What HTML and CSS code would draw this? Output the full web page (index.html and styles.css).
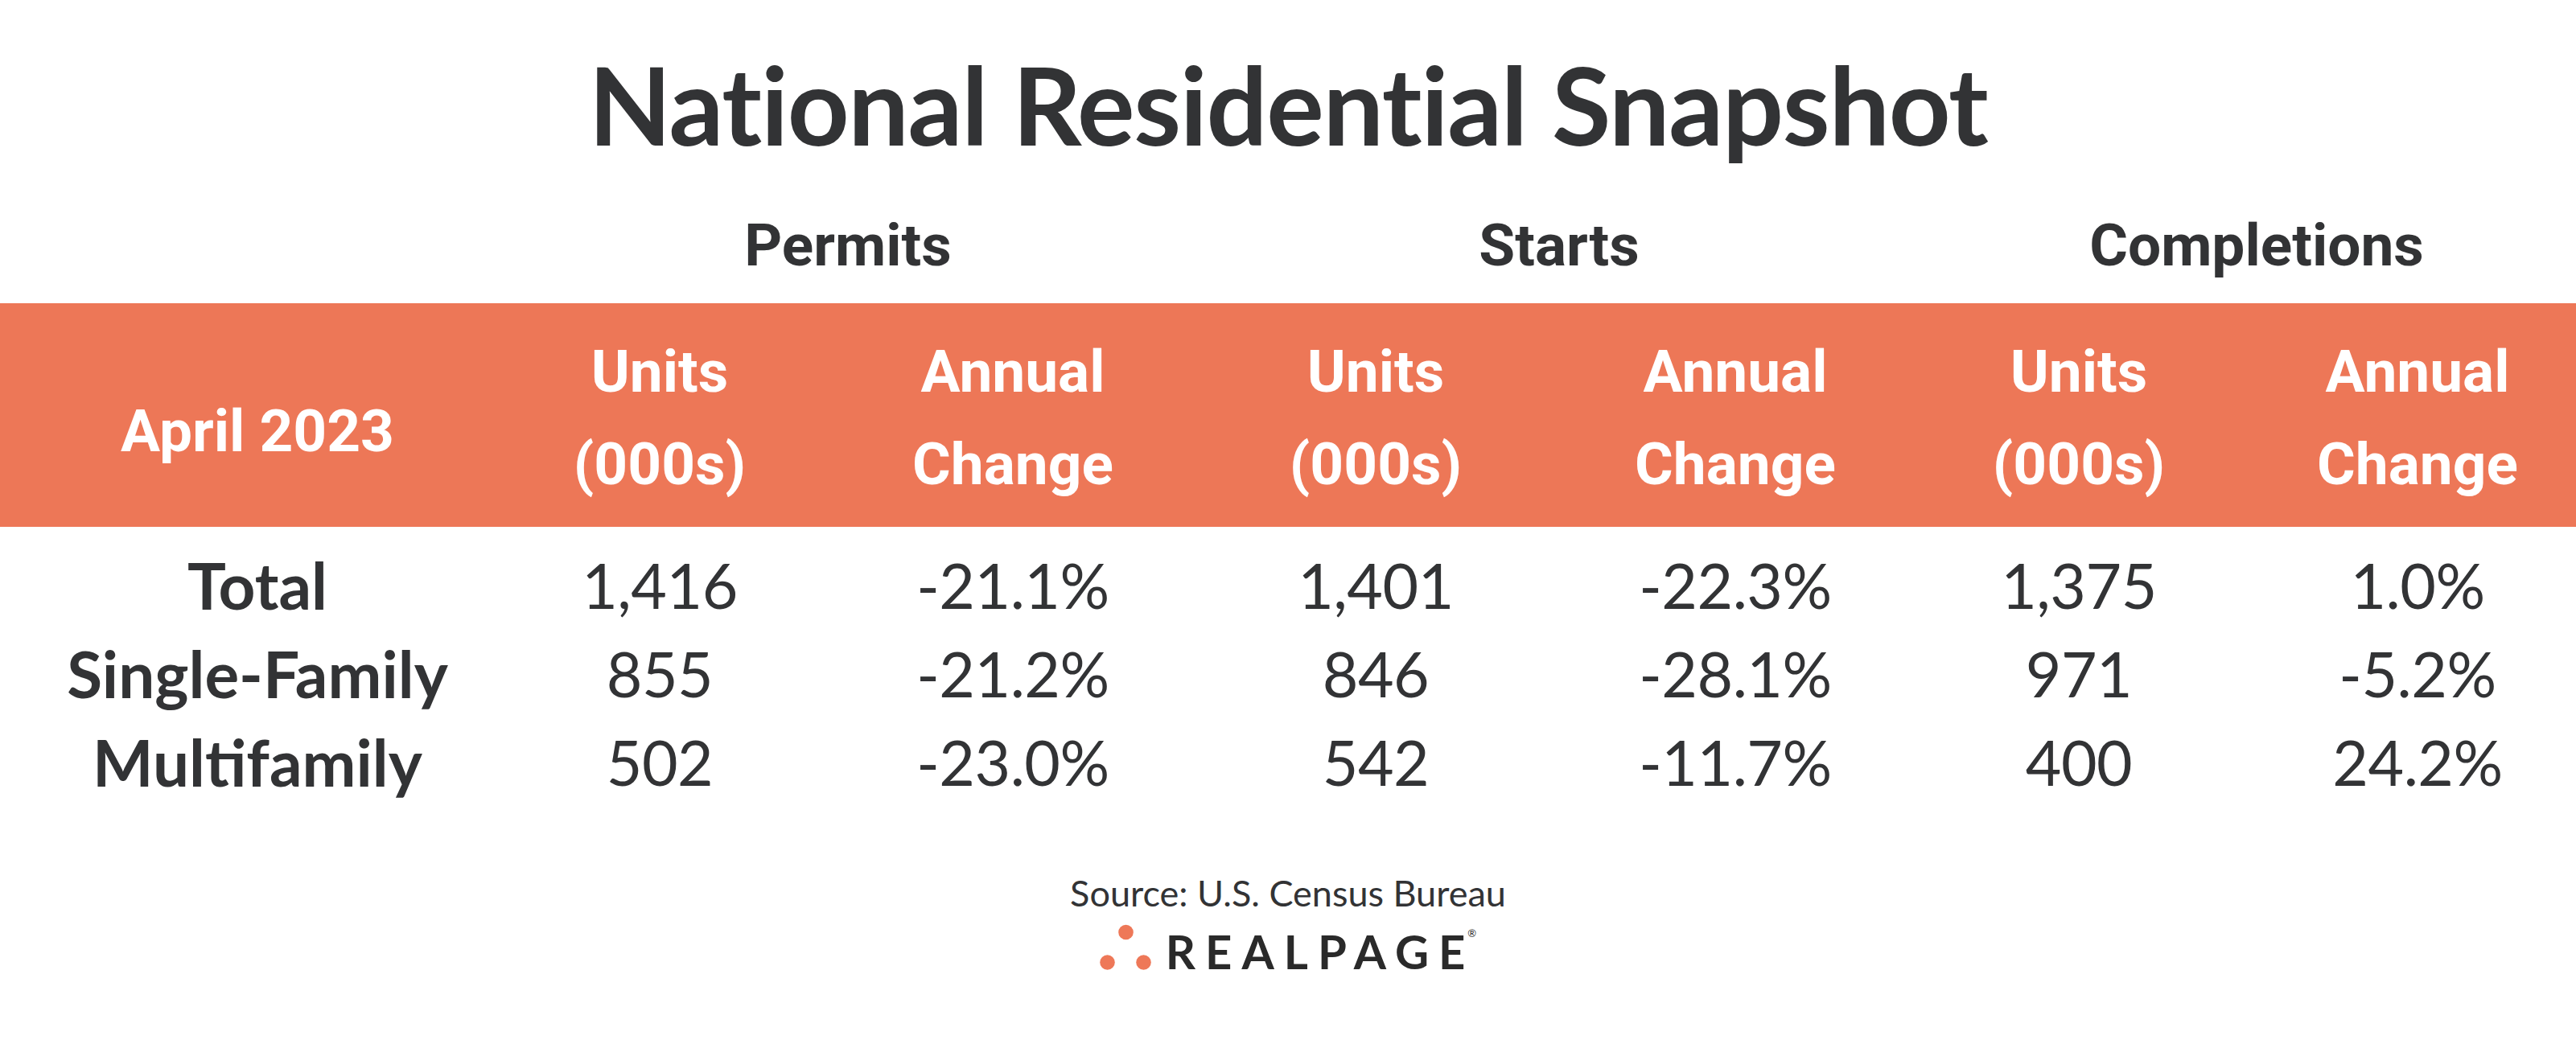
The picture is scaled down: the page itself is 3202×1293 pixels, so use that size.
FILE: index.html
```html
<!DOCTYPE html>
<html lang="en">
<head>
<meta charset="utf-8">
<title>National Residential Snapshot</title>
<link rel="stylesheet" href="styles.css">
</head>
<body>
<main class="page">
  <h1 class="title">National Residential Snapshot</h1>

  <div class="groups">
    <div></div>
    <div>Permits</div>
    <div>Starts</div>
    <div>Completions</div>
  </div>

  <div class="band">
    <div class="band-label">April 2023</div>
    <div>Units<br>(000s)</div>
    <div>Annual<br>Change</div>
    <div>Units<br>(000s)</div>
    <div>Annual<br>Change</div>
    <div>Units<br>(000s)</div>
    <div class="last">Annual<br>Change</div>
  </div>

  <div class="rows">
    <div class="label">Total</div>
    <div>1,416</div>
    <div>-21.1%</div>
    <div>1,401</div>
    <div>-22.3%</div>
    <div>1,375</div>
    <div class="last">1.0%</div>

    <div class="label">Single-Family</div>
    <div>855</div>
    <div>-21.2%</div>
    <div>846</div>
    <div>-28.1%</div>
    <div>971</div>
    <div class="last">-5.2%</div>

    <div class="label">Multifamily</div>
    <div>502</div>
    <div>-23.0%</div>
    <div>542</div>
    <div>-11.7%</div>
    <div>400</div>
    <div class="last">24.2%</div>
  </div>

  <p class="source">Source: U.S. Census Bureau</p>

  <div class="logo">
    <svg class="logo-dots" width="64" height="58" viewBox="0 0 64 58" aria-hidden="true">
      <circle cx="32.5" cy="10" r="9.3" fill="#EE7858"/>
      <circle cx="9.5" cy="47.5" r="9.3" fill="#EE7858"/>
      <circle cx="54.5" cy="47.5" r="9.3" fill="#EE7858"/>
    </svg>
    <span class="logo-text">REALPAG<span class="logo-last">E</span><sup class="reg">®</sup></span>
  </div>
</main>
</body>
</html>
```

FILE: styles.css
```css
html, body {
  margin: 0;
  padding: 0;
  background: #ffffff;
}

body {
  color: #323335;
  font-family: "Lato", "Open Sans", sans-serif;
}

.page {
  width: 3202px;
}

.title {
  margin: 50px 0 0;
  font-family: "Lato", sans-serif;
  font-weight: 700;
  font-size: 134px;
  line-height: 1.2;
  letter-spacing: -1.3px;
  text-align: center;
  color: #323335;
}

.groups {
  display: grid;
  grid-template-columns: 640px 828px 940px 794px;
  margin-top: 44px;
  height: 100px;
  font-family: "Roboto", sans-serif;
  font-weight: 700;
  font-size: 73px;
  line-height: 100px;
  text-align: center;
  color: #323335;
}

.band,
.rows {
  display: grid;
  grid-template-columns: 640px 360px 518px 384px 510px 344px 446px;
  text-align: center;
}

.band {
  margin-top: 22px;
  padding: 28px 0 20px;
  background: #ED7757;
  color: #ffffff;
  font-family: "Roboto", sans-serif;
  font-weight: 700;
  font-size: 73px;
  line-height: 115px;
}

.band-label {
  padding-top: 74px;
}

.last {
  padding-left: 52px;
}

.rows {
  margin-top: 17px;
  grid-auto-rows: 110px;
  font-family: "Lato", sans-serif;
  font-weight: 400;
  font-size: 77px;
  line-height: 110px;
  letter-spacing: -0.5px;
  color: #323335;
}

.rows .label {
  font-weight: 700;
  font-size: 80px;
  letter-spacing: 0;
}

.source {
  margin: 81px 0 0;
  font-family: "Lato", sans-serif;
  font-size: 45px;
  line-height: 54px;
  text-align: center;
  color: #323335;
}

.logo {
  display: flex;
  justify-content: center;
  align-items: flex-start;
  margin-top: 12px;
}

.logo-dots {
  display: block;
  flex: none;
}

.logo-text {
  margin-top: 5px;
  margin-left: 18px;
  font-family: "Lato", sans-serif;
  font-weight: 700;
  font-size: 58px;
  line-height: 58px;
  letter-spacing: 12px;
  color: #2a2a2a;
}

.logo-last {
  letter-spacing: 0;
}

.reg {
  font-size: 13px;
  line-height: 13px;
  letter-spacing: 0;
  vertical-align: top;
  margin-left: 3px;
  font-weight: 400;
}
```
